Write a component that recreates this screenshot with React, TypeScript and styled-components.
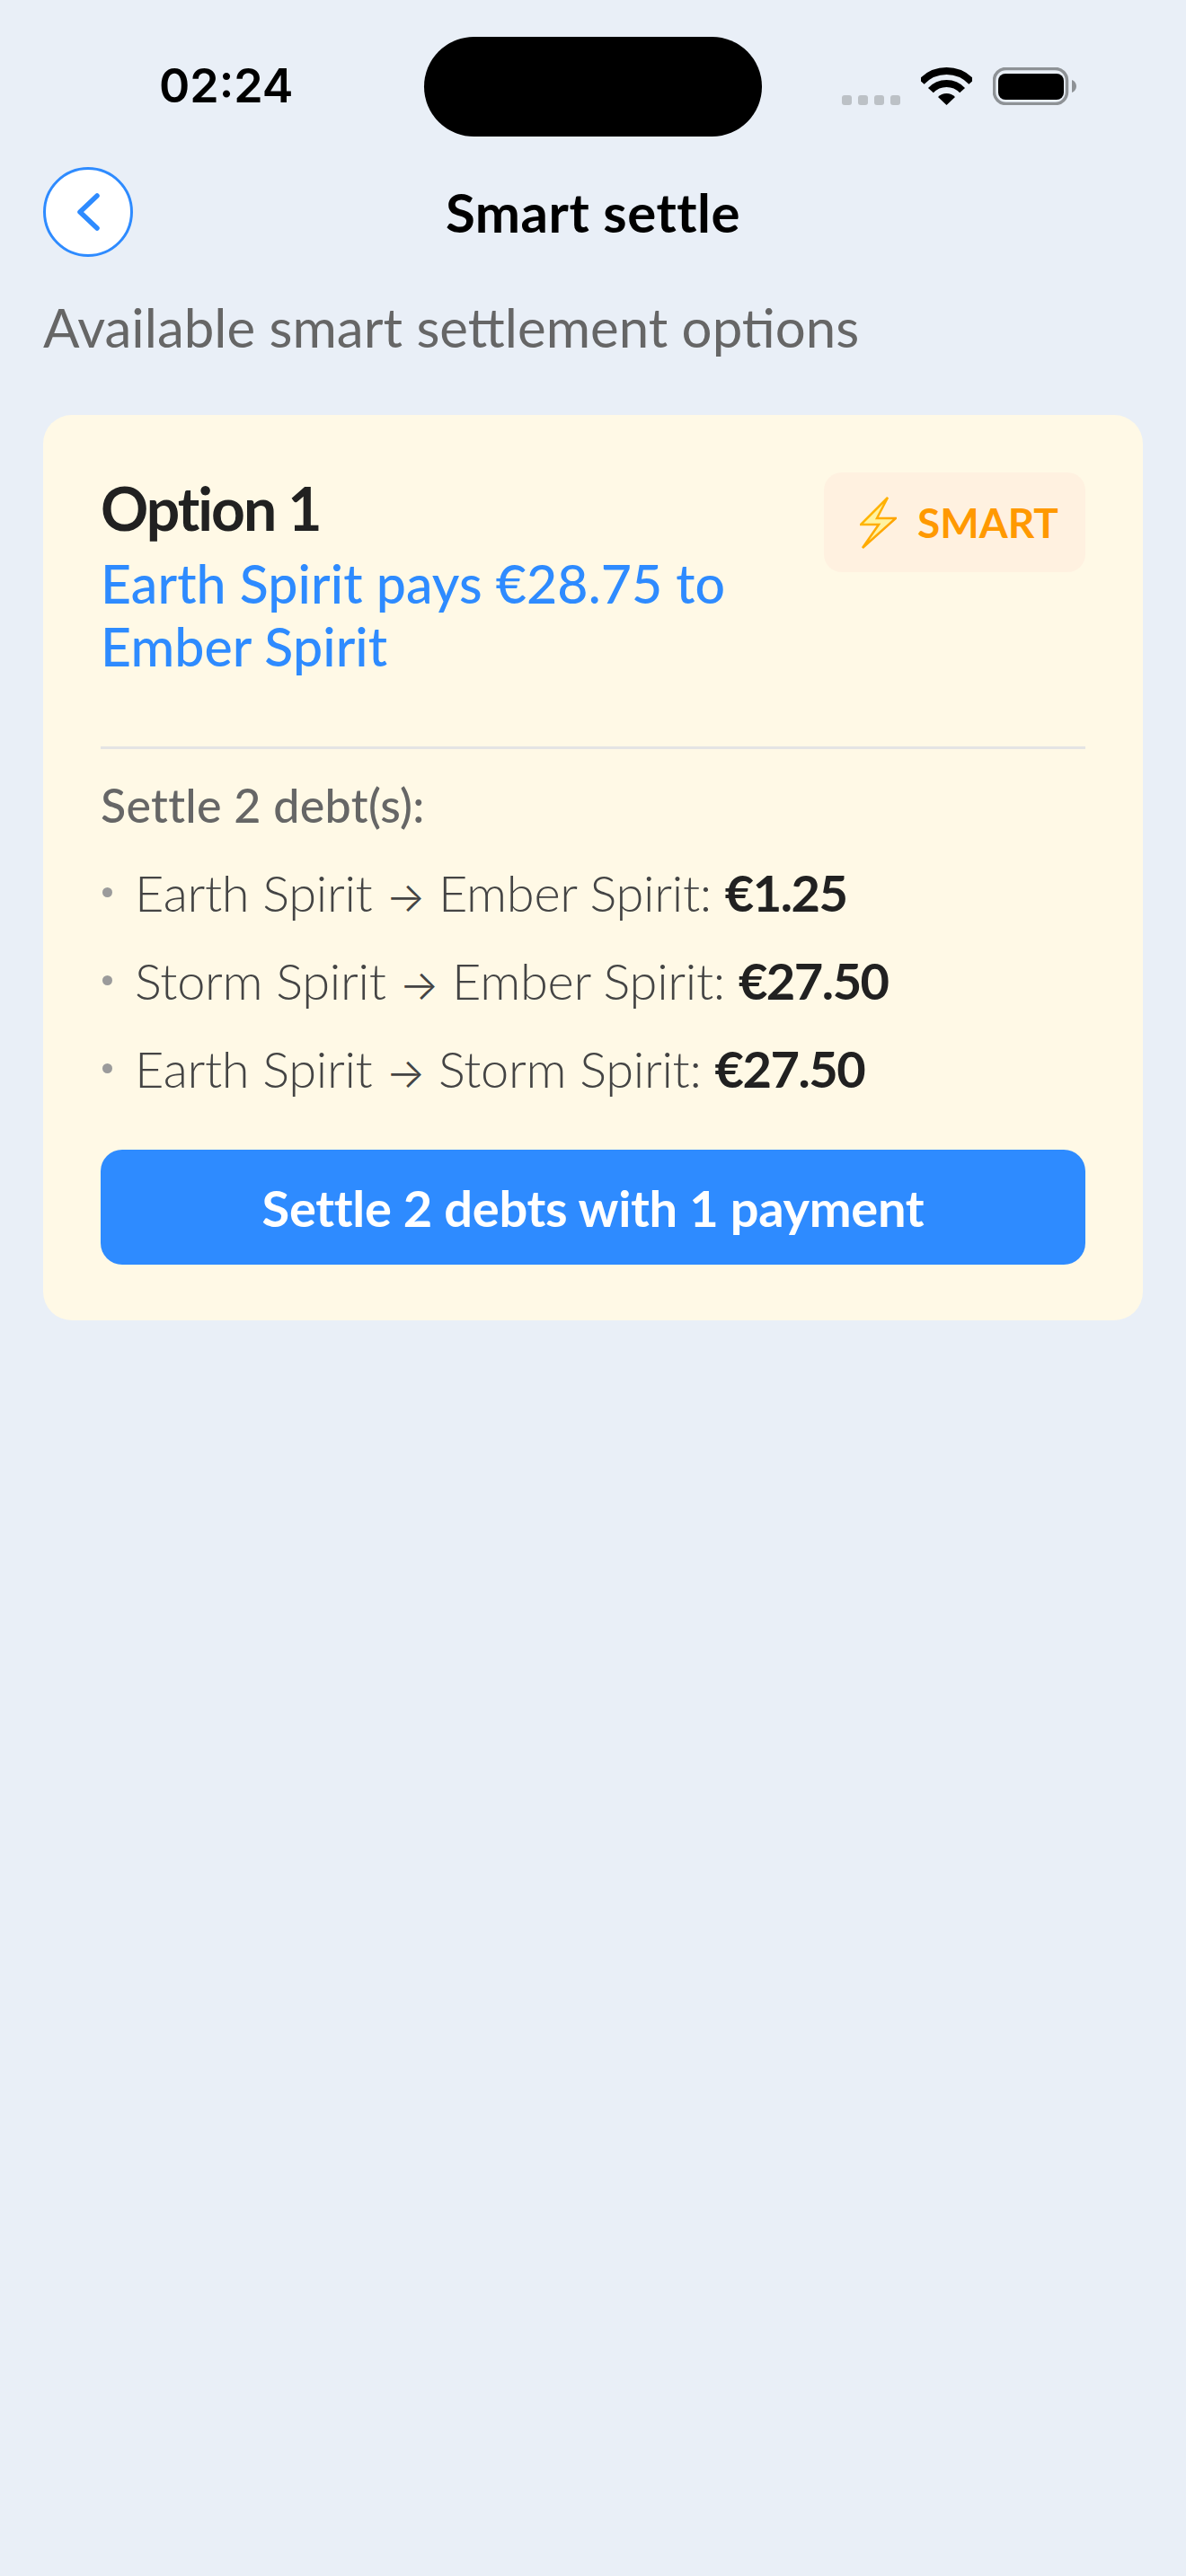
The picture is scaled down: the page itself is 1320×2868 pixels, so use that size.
import React from 'react'
import styled, { createGlobalStyle } from 'styled-components'

const GlobalStyle = createGlobalStyle`
  html, body {
    margin: 0;
    padding: 0;
    background: #e9eff7;
  }
  * {
    box-sizing: border-box;
  }
`

const Page = styled.div`
  width: 1320px;
  height: 2868px;
  background: #e9eff7;
  font-family: "Lato", "Noto Sans", sans-serif;
  overflow: hidden;
`
const StatusBar = styled.div`
  display: grid;
  grid-template-columns: 472px 376px 1fr;
  padding-top: 41px;
  height: 152px;
`
const Clock = styled.div`
  padding: 29px 0 0 177px;
  font-family: "Inter", sans-serif;
  font-size: 52px;
  line-height: 52px;
  font-weight: 600;
  color: #000;
`
const Island = styled.div`
  height: 111px;
  background: #000;
  border-radius: 56px;
`
const StatusIcons = styled.div`
  display: flex;
  align-items: flex-end;
  height: 42px;
  margin-top: 34px;
  padding-left: 89px;
`
const SignalDots = styled.div`
  display: flex;
  gap: 7px;
  margin-right: 23px;
`
const SignalDot = styled.span`
  width: 11px;
  height: 11px;
  border-radius: 3px;
  background: #bcc1c6;
`
const BatteryIcon = styled.svg`
  margin-left: 23px;
`
const Main = styled.div`
  padding: 34px 48px 0;
`
const Header = styled.header`
  display: grid;
  grid-template-columns: 100px 1fr 100px;
  align-items: center;
  height: 100px;
`
const BackButton = styled.button`
  display: flex;
  align-items: center;
  justify-content: center;
  width: 100px;
  height: 100px;
  padding: 0;
  background: #fff;
  border: 3px solid #2e8bff;
  border-radius: 50%;
`
const Title = styled.h1`
  margin: 0;
  text-align: center;
  font-size: 60px;
  line-height: 100px;
  font-weight: 700;
  letter-spacing: 0.5px;
  color: #000;
`
const Subtitle = styled.p`
  margin: 42px 0 0;
  font-size: 60px;
  line-height: 72px;
  font-weight: 400;
  color: #666;
`
const Card = styled.section`
  margin-top: 62px;
  padding: 64px 64px 62px;
  background: #fff9e6;
  border-radius: 32px;
`
const CardTop = styled.div`
  display: flex;
  justify-content: space-between;
  align-items: flex-start;
  height: 308px;
  border-bottom: 3px solid #e4e4e4;
`
const Heading = styled.div`
  width: 740px;
`
const OptionTitle = styled.h2`
  margin: 0 0 9px;
  font-size: 66px;
  line-height: 80px;
  font-weight: 700;
  letter-spacing: -2px;
  color: #212121;
`
const PaysText = styled.div`
  font-size: 59px;
  line-height: 70px;
  font-weight: 500;
  letter-spacing: 0.1px;
  color: #2e8bff;
`
const SmartBadge = styled.div`
  display: flex;
  align-items: center;
  gap: 23px;
  width: 291px;
  height: 111px;
  padding-left: 40px;
  background: #fff1e0;
  border-radius: 20px;
  font-size: 46px;
  font-weight: 700;
  color: #ff9900;
`
const DebtsLabel = styled.div`
  margin-top: 32px;
  font-size: 52px;
  line-height: 60px;
  font-weight: 500;
  letter-spacing: 0.3px;
  color: #666;
`
const DebtList = styled.ul`
  list-style: none;
  margin: 18px 0 0;
  padding: 0;
`
const DebtRow = styled.li`
  display: flex;
  align-items: center;
  gap: 25px;
  height: 98px;
  font-size: 56px;
  font-weight: 300;
  letter-spacing: -0.3px;
  color: #444;
`
const Bullet = styled.span`
  width: 11px;
  height: 11px;
  margin-left: 2px;
  border-radius: 50%;
  background: #9b9b9b;
`
const Arrow = styled.span`
  font-family: "Inter", sans-serif;
  font-size: 46px;
  font-weight: 300;
`
const Amount = styled.b`
  font-weight: 700;
  letter-spacing: -1.5px;
  color: #212121;
`
const SettleButton = styled.button`
  display: block;
  width: 100%;
  height: 128px;
  margin-top: 42px;
  background: #2e8bff;
  border: 0;
  border-radius: 24px;
  font-family: inherit;
  font-size: 56px;
  font-weight: 700;
  letter-spacing: -0.3px;
  color: #fff;
`

const debts = [
  { from: 'Earth Spirit', to: 'Ember Spirit', amount: '€1.25' },
  { from: 'Storm Spirit', to: 'Ember Spirit', amount: '€27.50' },
  { from: 'Earth Spirit', to: 'Storm Spirit', amount: '€27.50' },
]

export default function App() {
  return (
    <Page>
      <GlobalStyle />
      <StatusBar>
        <Clock>02:24</Clock>
        <Island />
        <StatusIcons>
          <SignalDots>
            <SignalDot />
            <SignalDot />
            <SignalDot />
            <SignalDot />
          </SignalDots>
          <svg width="57" height="42" viewBox="0 0 57 42">
            <path d="M0.7 16.1A38 38 0 0 1 56.3 16.1" fill="none" stroke="#000" strokeWidth="8" />
            <path d="M10.9 25.6A24 24 0 0 1 46.1 25.6" fill="none" stroke="#000" strokeWidth="8" />
            <path d="M28.5 42L19 33.1A13 13 0 0 1 38 33.1Z" fill="#000" />
          </svg>
          <BatteryIcon width="93" height="42" viewBox="0 0 93 42">
            <rect x="1.5" y="1.5" width="81" height="39" rx="13" fill="none" stroke="#8e9296" strokeWidth="3.5" />
            <rect x="6" y="7" width="73" height="29" rx="8" fill="#000" />
            <path d="M88 14C91 15 93 18 93 21C93 24 91 27 88 28Z" fill="#8e9296" />
          </BatteryIcon>
        </StatusIcons>
      </StatusBar>
      <Main>
        <Header>
          <BackButton aria-label="Back">
            <svg width="26" height="42" viewBox="0 0 26 42">
              <path d="M23 3L4 21L23 39" fill="none" stroke="#2e8bff" strokeWidth="5.5" strokeLinecap="round" strokeLinejoin="round" />
            </svg>
          </BackButton>
          <Title>Smart settle</Title>
        </Header>
        <Subtitle>Available smart settlement options</Subtitle>
        <Card>
          <CardTop>
            <Heading>
              <OptionTitle>Option 1</OptionTitle>
              <PaysText>Earth Spirit pays €28.75 to Ember Spirit</PaysText>
            </Heading>
            <SmartBadge>
              <svg width="41" height="58" viewBox="0 0 41 58">
                <defs>
                  <linearGradient id="bolt" x1="0" y1="0" x2="1" y2="1">
                    <stop offset="0" stopColor="#ffc107" />
                    <stop offset="1" stopColor="#ff9800" />
                  </linearGradient>
                </defs>
                <path d="M31 1L1 31H21L3 57L40 24H19Z" fill="#fff3a0" stroke="url(#bolt)" strokeWidth="2.5" strokeLinejoin="miter" />
              </svg>
              SMART
            </SmartBadge>
          </CardTop>
          <DebtsLabel>Settle 2 debt(s):</DebtsLabel>
          <DebtList>
            {debts.map((debt) => (
              <DebtRow key={debt.from + debt.to}>
                <Bullet />
                <span>
                  {debt.from} <Arrow>→</Arrow> {debt.to}: <Amount>{debt.amount}</Amount>
                </span>
              </DebtRow>
            ))}
          </DebtList>
          <SettleButton>Settle 2 debts with 1 payment</SettleButton>
        </Card>
      </Main>
    </Page>
  )
}
